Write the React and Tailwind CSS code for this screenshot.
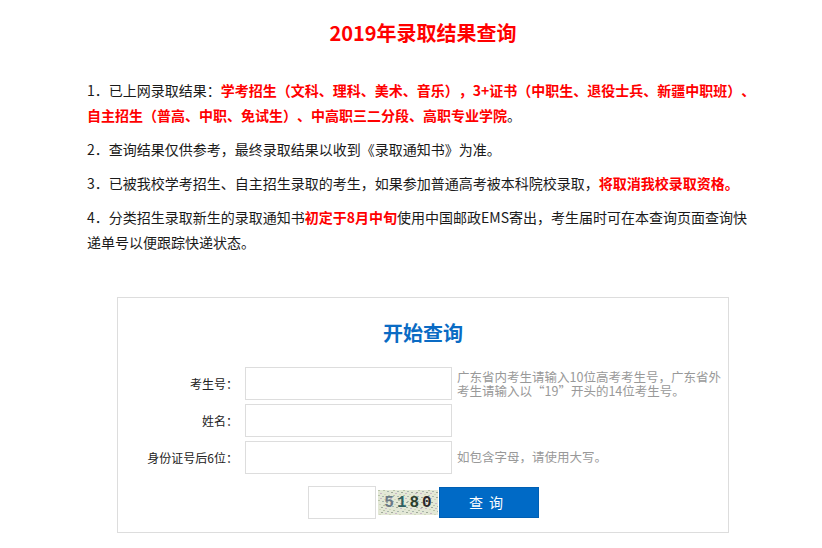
import React from 'react'

const font = { fontFamily: '"Noto Sans CJK SC", "Noto Sans", sans-serif' }

// captcha noise, drawn once
function CaptchaNoise() {
  const dots = []
  for (let i = 0; i < 140; i++) {
    const x = (i * 37) % 60
    const y = (i * 53) % 25
    const c = ['#b8c4a8', '#c9b8c8', '#a9b7b0', '#d2d8bd', '#9fa99a'][i % 5]
    dots.push(<rect key={i} x={x} y={y} width="2" height="1" fill={c} />)
  }
  return (
    <svg className="absolute inset-0" width="60" height="25" viewBox="0 0 60 25">
      <rect width="60" height="25" fill="#e3e8d6" />
      {dots}
    </svg>
  )
}

const Red = ({ children }) => <span className="text-[#ff0000] font-bold">{children}</span>

export default function App() {
  return (
    <div className="min-h-[548px] bg-white pl-[87px] pt-[20px] [text-spacing-trim:space-all]" style={font}>
      <div className="w-[672px]">
        <h1 className="text-center text-[20px] leading-[26px] font-bold text-[#ff0000]">2019年录取结果查询</h1>

        {/* notes */}
        <div className="mt-[32px] text-[14px] leading-[25px] text-[#1a1a1a] flex flex-col gap-[9px]">
          <p>
            1．已上网录取结果：<Red>学考招生（文科、理科、美术、音乐），3+证书（中职生、退役士兵、新疆中职班）、自主招生（普高、中职、免试生）、中高职三二分段、高职专业学院</Red>。
          </p>
          <p>2．查询结果仅供参考，最终录取结果以收到《录取通知书》为准。</p>
          <p>
            3．已被我校学考招生、自主招生录取的考生，如果参加普通高考被本科院校录取，<Red>将取消我校录取资格。</Red>
          </p>
          <p>
            4．分类招生录取新生的录取通知书<Red>初定于8月中旬</Red>使用中国邮政EMS寄出，考生届时可在本查询页面查询快递单号以便跟踪快递状态。
          </p>
        </div>

        {/* query box */}
        <div className="mt-[42px] mx-auto w-[612px] border border-[#dddddd] pt-[21px] pb-[13px]">
          <h2 className="text-center text-[20px] leading-[28px] font-bold text-[#0a6bc4]">开始查询</h2>

          <div className="mt-[20px] flex flex-col gap-[4px]">
            <div className="flex items-center">
              <label className="w-[120px] text-right text-[12px] text-[#222]">考生号：</label>
              <input className="ml-[7px] w-[207px] h-[33px] border border-[#dddddd] outline-none" />
              <div className="ml-[5px] w-[270px] text-[12.5px] leading-[14px] text-[#999999]">
                广东省内考生请输入10位高考考生号，广东省外考生请输入以“19”开头的14位考生号。
              </div>
            </div>
            <div className="flex items-center">
              <label className="w-[120px] text-right text-[12px] text-[#222]">姓名：</label>
              <input className="ml-[7px] w-[207px] h-[33px] border border-[#dddddd] outline-none" />
            </div>
            <div className="flex items-center">
              <label className="w-[120px] text-right text-[12px] text-[#222]">身份证号后6位：</label>
              <input className="ml-[7px] w-[207px] h-[33px] border border-[#dddddd] outline-none" />
              <div className="ml-[5px] text-[12.5px] text-[#999999]">如包含字母，请使用大写。</div>
            </div>
          </div>

          {/* captcha row */}
          <div className="mt-[12px] flex items-center pl-[190px]">
            <input className="w-[68px] h-[33px] border border-[#dddddd] outline-none" />
            <div className="relative ml-[2px] w-[60px] h-[25px] overflow-hidden">
              <CaptchaNoise />
              <div className="relative flex h-full items-center justify-center gap-[3px] text-[16px]" style={{ fontFamily: '"Liberation Mono", monospace' }}>
                <span className="text-[#6b7a86] font-bold">5</span>
                <span className="text-[#2f6060] font-bold">1</span>
                <span className="text-[#2c3f2c] font-bold">8</span>
                <span className="text-[#2a2a2a] font-bold">0</span>
              </div>
            </div>
            <button className="ml-[1px] w-[100px] h-[31px] bg-[#006ac6] border border-[#005fb3] text-white text-[14px] tracking-[6px]">查询</button>
          </div>
        </div>
      </div>
    </div>
  )
}
